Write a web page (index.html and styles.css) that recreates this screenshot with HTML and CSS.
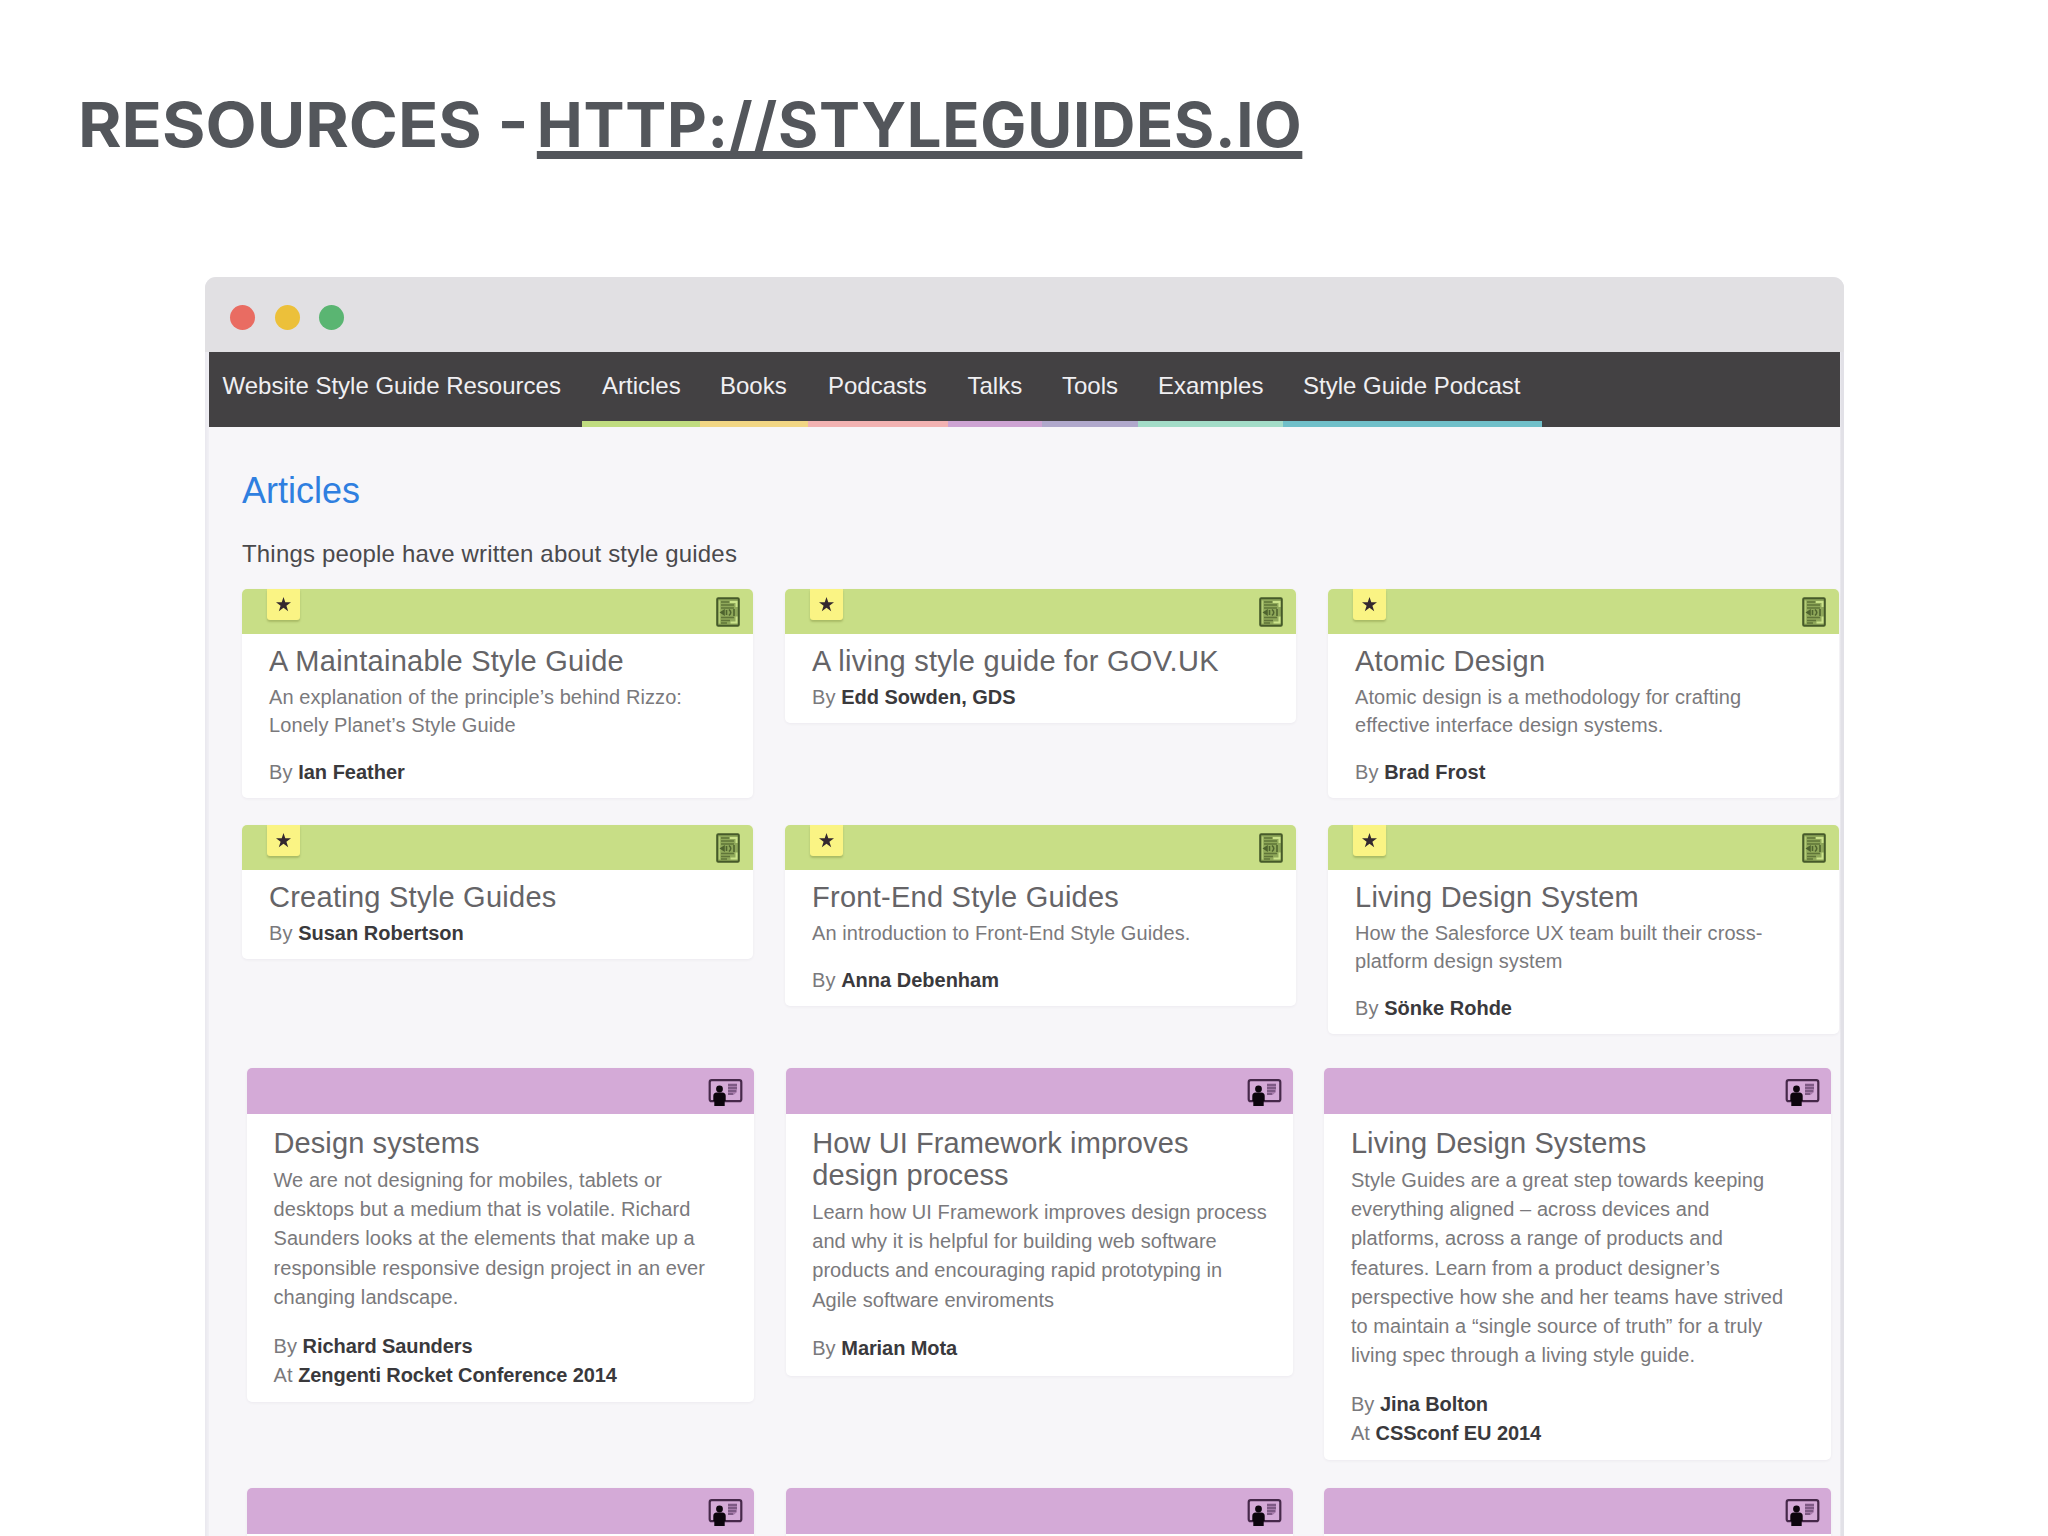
FILE: index.html
```html
<!DOCTYPE html>
<html lang="en">
<head>
<meta charset="utf-8">
<title>Resources - styleguides.io</title>
<link rel="stylesheet" href="styles.css">
</head>
<body>
<svg class="sprite" aria-hidden="true">
  <symbol id="i-star" viewBox="0 0 16 16"><path d="M8 0l1.9 5.6H16l-4.9 3.6 1.9 5.9L8 11.5l-5 3.6 1.9-5.9L0 5.600h6.100z" fill="#33282f"/></symbol>
  <symbol id="i-doc" viewBox="0 0 24 30">
    <rect x="1.200" y="1.200" width="21.600" height="27.600" rx="1" fill="#8fa85a" stroke="#465a2a" stroke-width="2"/>
    <path d="M3.500 3.500v23" stroke="#b4cc76" stroke-width="1.500"/>
    <path d="M14 5h6.500v5M14.500 25.500h6v-6" stroke="#cbe38a" stroke-width="2" fill="none"/>
    <path d="M5 5h8M5 8h13M5 11h13M5 20.500h13M5 23.500h9M5 26h6" stroke="#607539" stroke-width="1.500"/>
    <path d="M5 15.500l3-2v4zM10.500 13v5M18 12v7" stroke="#4f642f" stroke-width="1.600" fill="#4f642f"/>
    <path d="M13 12.500q3.500 3 0 6" stroke="#4f642f" stroke-width="1.600" fill="none"/>
  </symbol>
  <symbol id="i-talk" viewBox="0 0 34 27">
    <rect x="1.200" y="1.200" width="31.600" height="21" rx="2" fill="none" stroke="#46294a" stroke-width="2.200"/>
    <path d="M19.500 4.500h9V13l-3.500 3h-5.500z" fill="#a77bab"/>
    <path d="M19.500 6h9M19.500 9h9M19.500 12h8M19.500 15h5" stroke="#72507a" stroke-width="1.300"/>
    <circle cx="11" cy="10" r="3.400" fill="#0c050d"/>
    <path d="M4.800 17q0-3.500 3.500-3.500h5.400q3.500 0 3.500 3.500v5h-1v5h-10.400v-5h-1z" fill="#0c050d"/>
  </symbol>
</svg>
<h1 class="slide-title"><span class="lead">RESOURCES - </span><a class="link">HTTP://STYLEGUIDES.IO</a></h1>
<div class="window">
  <div class="titlebar"><i class="dot red"></i><i class="dot amber"></i><i class="dot green"></i></div>
  <nav class="nav">
    <span class="brand">Website Style Guide Resources</span>
    <a class="tab articles">Articles</a><a class="tab books">Books</a><a class="tab podcasts">Podcasts</a><a class="tab talks">Talks</a><a class="tab tools">Tools</a><a class="tab examples">Examples</a><a class="tab show">Style Guide Podcast</a>
  </nav>
  <main class="content">
    <h2 class="heading">Articles</h2>
    <p class="tagline">Things people have written about style guides</p>
    <div class="grid article-grid">
      <article class="card">
        <header class="bar"><span class="badge"><svg class="star"><use href="#i-star"/></svg></span><svg class="doc"><use href="#i-doc"/></svg></header>
        <h3 class="title">A Maintainable Style Guide</h3>
        <p class="text">An explanation of the principle’s behind Rizzo:<br>Lonely Planet’s Style Guide</p>
        <p class="by">By <b>Ian Feather</b></p>
      </article>
      <article class="card">
        <header class="bar"><span class="badge"><svg class="star"><use href="#i-star"/></svg></span><svg class="doc"><use href="#i-doc"/></svg></header>
        <h3 class="title">A living style guide for GOV.UK</h3>
        <p class="by">By <b>Edd Sowden, GDS</b></p>
      </article>
      <article class="card">
        <header class="bar"><span class="badge"><svg class="star"><use href="#i-star"/></svg></span><svg class="doc"><use href="#i-doc"/></svg></header>
        <h3 class="title">Atomic Design</h3>
        <p class="text">Atomic design is a methodology for crafting<br>effective interface design systems.</p>
        <p class="by">By <b>Brad Frost</b></p>
      </article>
      <article class="card">
        <header class="bar"><span class="badge"><svg class="star"><use href="#i-star"/></svg></span><svg class="doc"><use href="#i-doc"/></svg></header>
        <h3 class="title">Creating Style Guides</h3>
        <p class="by">By <b>Susan Robertson</b></p>
      </article>
      <article class="card">
        <header class="bar"><span class="badge"><svg class="star"><use href="#i-star"/></svg></span><svg class="doc"><use href="#i-doc"/></svg></header>
        <h3 class="title">Front-End Style Guides</h3>
        <p class="text">An introduction to Front-End Style Guides.</p>
        <p class="by">By <b>Anna Debenham</b></p>
      </article>
      <article class="card">
        <header class="bar"><span class="badge"><svg class="star"><use href="#i-star"/></svg></span><svg class="doc"><use href="#i-doc"/></svg></header>
        <h3 class="title">Living Design System</h3>
        <p class="text">How the Salesforce UX team built their cross-<br>platform design system</p>
        <p class="by">By <b>Sönke Rohde</b></p>
      </article>
    </div>
    <div class="grid talk-grid">
      <article class="card">
        <header class="bar"><svg class="talk"><use href="#i-talk"/></svg></header>
        <h3 class="title">Design systems</h3>
        <p class="text">We are not designing for mobiles, tablets or<br>desktops but a medium that is volatile. Richard<br>Saunders looks at the elements that make up a<br>responsible responsive design project in an ever<br>changing landscape.</p>
        <p class="by">By <b>Richard Saunders</b><br>At <b>Zengenti Rocket Conference 2014</b></p>
      </article>
      <article class="card">
        <header class="bar"><svg class="talk"><use href="#i-talk"/></svg></header>
        <h3 class="title">How UI Framework improves<br>design process</h3>
        <p class="text">Learn how UI Framework improves design process<br>and why it is helpful for building web software<br>products and encouraging rapid prototyping in<br>Agile software enviroments</p>
        <p class="by">By <b>Marian Mota</b></p>
      </article>
      <article class="card">
        <header class="bar"><svg class="talk"><use href="#i-talk"/></svg></header>
        <h3 class="title">Living Design Systems</h3>
        <p class="text">Style Guides are a great step towards keeping<br>everything aligned – across devices and<br>platforms, across a range of products and<br>features. Learn from a product designer’s<br>perspective how she and her teams have strived<br>to maintain a “single source of truth” for a truly<br>living spec through a living style guide.</p>
        <p class="by">By <b>Jina Bolton</b><br>At <b>CSSconf EU 2014</b></p>
      </article>
      <article class="card"><header class="bar"><svg class="talk"><use href="#i-talk"/></svg></header></article>
      <article class="card"><header class="bar"><svg class="talk"><use href="#i-talk"/></svg></header></article>
      <article class="card"><header class="bar"><svg class="talk"><use href="#i-talk"/></svg></header></article>
    </div>
  </main>
</div>
</body>
</html>
```
FILE: styles.css
```css
* { box-sizing: border-box; margin: 0; padding: 0; }
body {
  width: 2048px; height: 1536px; overflow: hidden; background: #fff;
  display: flex; flex-direction: column;
  font-family: "Liberation Sans", Arial, sans-serif; white-space: nowrap;
}
.sprite { display: none; }
.slide-title {
  height: 277px; padding: 88px 0 0 78px; line-height: 74px;
  font-family: Inter, "Open Sans", sans-serif; font-size: 61.5px; font-weight: 700; color: #53565b;
}
.lead { display: inline-block; white-space: pre; margin-right: 27px; transform: scaleX(1.08); transform-origin: left; }
.link {
  letter-spacing: .7px;
  text-decoration: underline; text-decoration-thickness: 8px; text-underline-offset: 4px;
  text-decoration-skip-ink: none;
}
.window {
  width: 1639px; margin-left: 205px; padding: 0 4px; flex: 1; min-height: 0;
  background: linear-gradient(to right, #e9e8ee, #f1f0f5 4px, #f1f0f5 1635px, #e2e1e7 1636px);
  border-radius: 11px 11px 0 0; overflow: hidden;
}
.titlebar {
  height: 75px; margin: 0 -4px; padding: 6px 0 0 25px; background: #e1e0e3;
  display: flex; align-items: center; gap: 19.600px;
}
.dot { width: 25px; height: 25px; border-radius: 50%; }
.red { background: #e96c62; }
.amber { background: #ecc03a; }
.green { background: #5ab572; }
.nav { display: flex; height: 75px; background: #434143; color: #f0eff2; font-size: 24px; line-height: 28px; }
.brand { width: 373px; padding: 19.500px 0 0 13.500px; }
.tab { padding: 19.500px 0 0 20px; border-bottom: 6px solid; color: #f0eff2; }
.articles { width: 118px; border-color: #c0dc80; }
.books { width: 108px; border-color: #f2d684; }
.podcasts { width: 139.500px; border-color: #f2b2b2; }
.talks { width: 94.500px; border-color: #cda3d3; }
.tools { width: 96px; border-color: #b0a8cc; }
.examples { width: 145px; border-color: #a3dcc8; }
.show { width: 259px; border-color: #70bfc9; }
.content { height: 1200px; padding: 44px 0 0 33px; background: #f7f6f9; }
.heading { font-size: 36px; line-height: 40px; font-weight: 400; color: #2f7fe0; }
.tagline { margin-top: 28.500px; font-size: 24px; line-height: 28px; letter-spacing: .18px; color: #4a494c; }
.grid { display: grid; align-items: start; }
.article-grid { margin-top: 21.500px; grid-template-columns: repeat(3, 511px); column-gap: 32px; row-gap: 27px; }
.talk-grid { margin: 33.500px 0 0 5px; grid-template-columns: repeat(3, 507px); column-gap: 31.700px; row-gap: 28px; }
.card {
  background: #fff; border-radius: 5px; padding-bottom: 12px; box-shadow: 0 1px 3px rgba(60, 50, 80, .06);
  font-size: 20px; line-height: 28px; letter-spacing: .09px; color: #7a797c;
}
.bar {
  display: flex; align-items: center; height: 45px; padding: 0 13px 0 24.500px;
  margin-bottom: 11px; background: #c8de86; border-radius: 5px 5px 0 0;
}
.badge {
  align-self: flex-start; width: 33px; height: 31px; background: #faf484; border-radius: 0 0 3px 3px;
  box-shadow: 0 2px 2px rgba(100, 110, 30, .3); display: flex; align-items: center; justify-content: center;
}
.star { width: 15px; height: 15px; }
.doc { width: 24px; height: 30px; margin-left: auto; }
.talk { width: 35px; height: 27px; margin: 3px -2px 0 auto; }
.title { padding-left: 27px; font-size: 29px; line-height: 32px; font-weight: 400; letter-spacing: .26px; color: #656467; margin-bottom: 6px; }
.text, .by { padding-left: 27px; }
.text { margin-bottom: 19px; }
.by b { color: #3a393c; letter-spacing: 0; }
.talk-grid .card { line-height: 29.200px; letter-spacing: .07px; }
.talk-grid .bar { height: 46px; margin-bottom: 13px; background: #d4aad7; }
.talk-grid .title { padding-left: 26.500px; letter-spacing: .1px; margin-bottom: 7.500px; }
.talk-grid .text, .talk-grid .by { padding-left: 26.500px; }
.talk-grid .text { margin-bottom: 19.500px; }
.talk-grid b { letter-spacing: -.08px; }
```
